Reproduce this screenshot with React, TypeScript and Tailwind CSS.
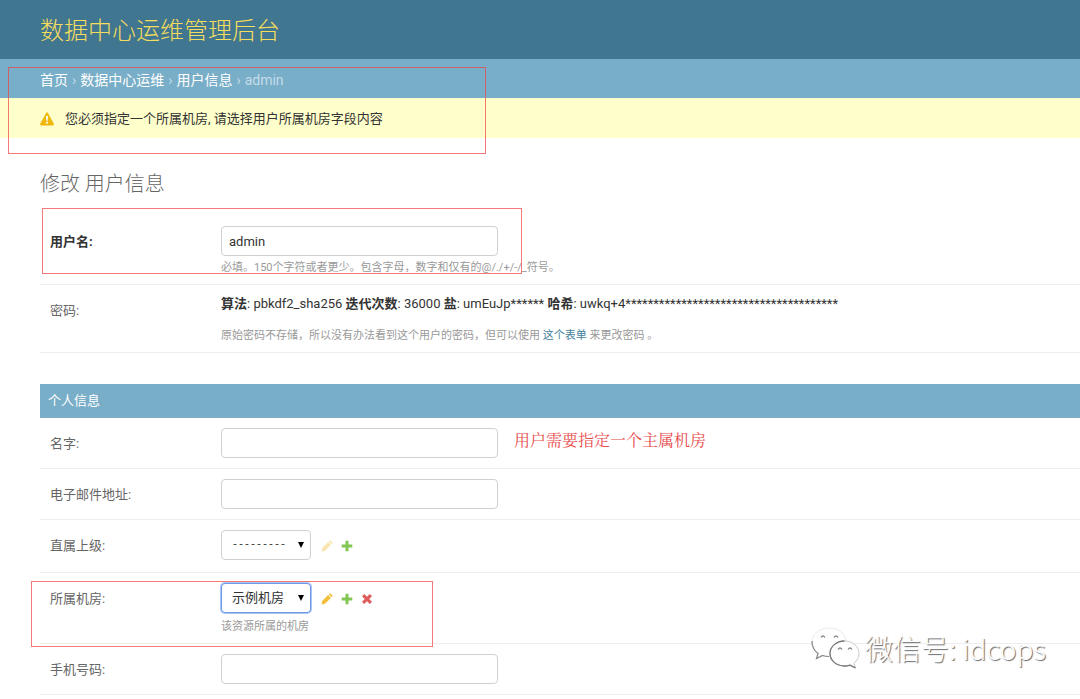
import type { ReactNode } from "react";

const inputClass =
  "block h-[30px] w-[277px] rounded border border-[#d0d0d0] bg-white px-[7px] text-[13px] text-[#333333] outline-none";

function Row({ label, htmlFor, bold = false, children }: { label: string; htmlFor?: string; bold?: boolean; children: ReactNode }) {
  return (
    <div className="relative flex border-b border-[#eeeeee] px-[10px] py-[10px]">
      <label
        htmlFor={htmlFor}
        className={`flex h-8 w-[171px] shrink-0 items-center self-start -mb-1 text-[13px] leading-4 ${bold ? "font-bold text-[#333333]" : "text-[#666666]"}`}
      >
        {label}
      </label>
      <div className="min-w-0 flex-1">{children}</div>
    </div>
  );
}

function Help({ children }: { children: ReactNode }) {
  return <p className="-mb-[2px] mt-1 text-[11px] leading-4 text-[#999999]">{children}</p>;
}

function Select({ id, option, focused = false }: { id: string; option: string; focused?: boolean }) {
  return (
    <span className="relative inline-block">
      <select
        id={id}
        className={`block h-[30px] w-[90px] appearance-none rounded border bg-white pl-[10px] text-[#333333] outline-none ${focused ? "border-[#6f9be8] text-[13px] ring-1 ring-[#a9c4f5]" : "border-[#d0d0d0] font-['Liberation_Mono',monospace] text-[10px]"}`}
      >
        <option>{option}</option>
      </select>
      <svg className="pointer-events-none absolute right-[7px] top-3 h-[6px] w-[6px]" viewBox="0 0 6 6">
        <path d="M0 0h6L3 6z" fill="#000" />
      </svg>
    </span>
  );
}

function PencilIcon() {
  return (
    <svg className="h-3 w-3" viewBox="0 0 12 12">
      <path d="M.5 11.500l.7-3.500 5.900-5.900 2.800 2.800L4 10.800zM7.800 1.400l.7-.7q.6-.5 1.200 0l1.600 1.600q.5.600 0 1.200l-.7.700z" fill="#f2bf3a" />
    </svg>
  );
}

function PlusIcon() {
  return (
    <svg className="h-3 w-3" viewBox="0 0 12 12">
      <path d="M4.500.700h3v3.800h3.800v3H7.500v3.800h-3V7.500H.700v-3h3.800z" fill="#82c653" />
    </svg>
  );
}

function CrossIcon() {
  return (
    <svg className="h-3 w-3" viewBox="0 0 12 12">
      <path d="M3.200 1L6 3.800 8.800 1 11 3.200 8.200 6 11 8.800 8.800 11 6 8.200 3.200 11 1 8.800 3.800 6 1 3.200z" fill="#e05d5d" />
    </svg>
  );
}

function WarningIcon() {
  return (
    <svg className="h-[14px] w-[14px]" viewBox="0 0 14 14">
      <path d="M6.200.8q.8-1.200 1.600 0l6 11q.5 1.400-.8 1.600H1q-1.300-.2-.8-1.600z" fill="#efb80b" />
      <path d="M6 4h2l-.3 4.700H6.300zM6.100 9.800h1.800v1.700H6.100z" fill="#fff" />
    </svg>
  );
}

function WechatIcon() {
  return (
    <svg className="h-[42px] w-[50px]" viewBox="0 0 50 42">
      <path
        d="M18 1C8.500 1 1 7.500 1 15.500c0 4.500 2.300 8.300 6 11L5.500 31.500l6-3q3 1 6.500 1c9.400 0 17-6.500 17-14.500S27.400 1 18 1z"
        fill="#fff"
        stroke="#e2e2e2"
        strokeWidth="0.8"
      />
      <path d="M1 14c0 5.500 2.300 9.800 6 12.500L5.500 31.500l6-3q3 1 6.500 1" fill="none" stroke="#888888" strokeWidth="1.2" />
      <path
        d="M33.500 14C25.500 14 19 19.500 19 26.500S25.500 39 33.500 39q3 0 5.500-.9l5.500 2.700-1.500-4.600c3-2.300 5-5.700 5-9.700C48 19.500 41.500 14 33.500 14z"
        fill="#fff"
        stroke="#bbbbbb"
        strokeWidth="0.8"
      />
      <path d="M33.500 14C25.500 14 19 19.500 19 26.500S25.500 39 33.500 39q3 0 5.500-.9l5.500 2.700" fill="none" stroke="#777777" strokeWidth="1.300" />
      <path
        d="M10 10.500q2-3 4 0M23 10.500q2-3 4 0M27 22.500q2-3 4 0M37 22.500q2-3 4 0"
        fill="none"
        stroke="#888888"
        strokeWidth="1.300"
      />
    </svg>
  );
}

export default function App() {
  return (
    <div className="relative min-h-screen overflow-hidden bg-white font-[Roboto,'Noto_Sans_CJK_SC',sans-serif] text-[13px] leading-4 text-[#333333]">
      <header className="flex h-[59px] items-center bg-[#417690] px-10 pt-[2px]">
        <h1 className="text-2xl font-light text-[#f5dd5d]">数据中心运维管理后台</h1>
      </header>

      <div className="relative">
        <nav className="flex h-[39px] items-center gap-1 bg-[#79aec8] px-10 pt-[2px] text-sm text-[#c4dce8]">
          <a href="#home" className="text-white">首页</a>
          <span>›</span>
          <a href="#idc" className="text-white">数据中心运维</a>
          <span>›</span>
          <a href="#users" className="text-white">用户信息</a>
          <span>›</span>
          <span>admin</span>
        </nav>
        <div className="flex h-10 items-center gap-[11px] bg-[#ffffcc] px-10 pt-[2px]">
          <WarningIcon />
          <p>您必须指定一个所属机房, 请选择用户所属机房字段内容</p>
        </div>
        <div className="pointer-events-none absolute -bottom-4 left-2 top-2 w-[478px] border border-[#f04040]/70" />
      </div>

      <main className="pl-10">
        <h2 className="pb-[19px] pt-[34px] text-xl font-light leading-[25px] text-[#666666]">修改 用户信息</h2>

        <form>
          <Row label="用户名:" htmlFor="username" bold>
            <input id="username" type="text" defaultValue="admin" className={inputClass} />
            <Help>必填。150个字符或者更少。包含字母，数字和仅有的@/./+/-/_符号。</Help>
            <div className="pointer-events-none absolute -top-2 bottom-[10px] left-[2px] w-[480px] border border-[#f04040]/70" />
          </Row>
          <Row label="密码:">
            <p className="pt-px text-[13px]">
              <strong>算法</strong>: pbkdf2_sha256 <strong>迭代次数</strong>: 36000 <strong>盐</strong>: umEuJp****** <strong>哈希</strong>: uwkq+4**************************************
            </p>
            <p className="-mb-[2px] mt-4 text-[11px] text-[#999999]">
              原始密码不存储，所以没有办法看到这个用户的密码，但可以使用 <a href="#password" className="text-[#447e9b]">这个表单</a> 来更改密码 。
            </p>
          </Row>

          <fieldset className="mt-[31px]">
            <h3 className="flex h-[34px] items-center bg-[#79aec8] px-2 text-[13px] text-white">个人信息</h3>
            <Row label="名字:" htmlFor="name">
              <div className="flex items-start gap-4">
                <input id="name" type="text" className={inputClass} />
                <span className="font-['Noto_Serif_CJK_SC','Noto_Sans_CJK_SC',serif] text-base leading-6 text-[#e84c4c]">用户需要指定一个主属机房</span>
              </div>
            </Row>
            <Row label="电子邮件地址:" htmlFor="email">
              <input id="email" type="email" className={inputClass} />
            </Row>
            <Row label="直属上级:" htmlFor="leader">
              <div className="flex h-8 items-start gap-[10px]">
                <Select id="leader" option="---------" />
                <div className="flex h-8 items-center gap-2">
                  <button type="button" aria-label="修改" disabled className="opacity-40"><PencilIcon /></button>
                  <button type="button" aria-label="增加"><PlusIcon /></button>
                </div>
              </div>
            </Row>
            <Row label="所属机房:" htmlFor="room">
              <div className="flex h-8 items-start gap-[10px]">
                <Select id="room" option="示例机房" focused />
                <div className="flex h-8 items-center gap-2">
                  <button type="button" aria-label="修改"><PencilIcon /></button>
                  <button type="button" aria-label="增加"><PlusIcon /></button>
                  <button type="button" aria-label="删除"><CrossIcon /></button>
                </div>
              </div>
              <Help>该资源所属的机房</Help>
              <div className="pointer-events-none absolute -bottom-1 -left-[9px] top-2 w-[402px] border border-[#f04040]/70" />
            </Row>
            <Row label="手机号码:" htmlFor="phone">
              <input id="phone" type="tel" className={inputClass} />
            </Row>
          </fieldset>
        </form>
      </main>

      <div className="pointer-events-none absolute bottom-[30px] right-[34px] flex items-center gap-1">
        <WechatIcon />
        <span className="font-['Noto_Sans_CJK_SC',sans-serif] text-[28px] font-light leading-10 text-white [text-shadow:1px_1px_1px_#666666]">
          微信号: idcops
        </span>
      </div>
    </div>
  );
}
